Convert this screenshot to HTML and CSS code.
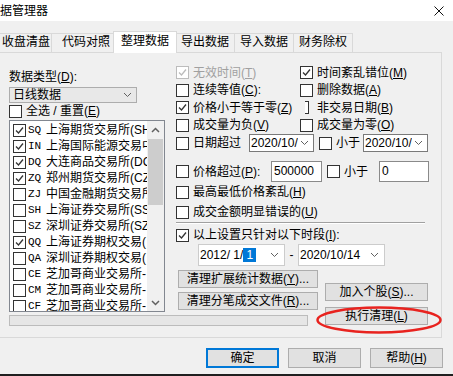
FILE: index.html
```html
<!DOCTYPE html>
<html lang="zh-CN">

<head>
    <meta charset="UTF-8">
    <meta name="viewport" content="width=device-width, initial-scale=1.0">
    <title>数据管理器</title>
    <link rel="stylesheet" href="styles.css">
</head>

<body>
    <div class="dialog">
        <div class="titlebar">
            <span class="title">据管理器</span>
            <span class="close"><svg viewBox="0 0 10 10"><path d="M0.5 0.5L9.5 9.5M9.5 0.5L0.5 9.5"/></svg></span>
        </div>

        <div class="tabs">
            <div class="tab">收盘清盘</div>
            <div class="tab">代码对照</div>
            <div class="tab active">整理数据</div>
            <div class="tab">导出数据</div>
            <div class="tab">导入数据</div>
            <div class="tab">财务除权</div>
        </div>

        <div class="panel">
            <!-- 左侧：数据类型 + 市场列表 -->
            <div class="types">
                <div class="label">数据类型(<u>D</u>):</div>
                <div class="combo">
                    <span class="value">日线数据</span>
                    <svg class="chev" viewBox="0 0 9 6"><path d="M1 1l3.5 3.5L8 1"/></svg>
                </div>
                <label class="check"><span class="box"></span><span>全选 / 重置(<u>E</u>)</span></label>
                <div class="listbox">
                    <div class="items">
                        <div class="item"><span class="box"><svg viewBox="0 0 11 11"><path d="M2 5.5l2.5 2.5L9 2.5"/></svg></span><span class="code">SQ</span>上海期货交易所(SHFE)</div>
                        <div class="item"><span class="box"><svg viewBox="0 0 11 11"><path d="M2 5.5l2.5 2.5L9 2.5"/></svg></span><span class="code">IN</span>上海国际能源交易中心</div>
                        <div class="item"><span class="box"><svg viewBox="0 0 11 11"><path d="M2 5.5l2.5 2.5L9 2.5"/></svg></span><span class="code">DQ</span>大连商品交易所(DCE)</div>
                        <div class="item"><span class="box"><svg viewBox="0 0 11 11"><path d="M2 5.5l2.5 2.5L9 2.5"/></svg></span><span class="code">ZQ</span>郑州期货交易所(CZCE)</div>
                        <div class="item"><span class="box"></span><span class="code">ZJ</span>中国金融期货交易所</div>
                        <div class="item"><span class="box"></span><span class="code">SH</span>上海证券交易所(SSE)</div>
                        <div class="item"><span class="box"></span><span class="code">SZ</span>深圳证券交易所(SZSE)</div>
                        <div class="item"><span class="box"><svg viewBox="0 0 11 11"><path d="M2 5.5l2.5 2.5L9 2.5"/></svg></span><span class="code">QQ</span>上海证券期权交易(</div>
                        <div class="item"><span class="box"></span><span class="code">QA</span>深圳证券期权交易(</div>
                        <div class="item"><span class="box"></span><span class="code">CE</span>芝加哥商业交易所-</div>
                        <div class="item"><span class="box"></span><span class="code">CM</span>芝加哥商业交易所-</div>
                        <div class="item"><span class="box"></span><span class="code">CF</span>芝加哥商业交易所-</div>
                    </div>
                    <div class="scrollbar">
                        <div class="arrow"><svg viewBox="0 0 9 6"><path d="M1 5l3.5-3.5L8 5"/></svg></div>
                        <div class="track"><div class="thumb"></div></div>
                        <div class="arrow"><svg viewBox="0 0 9 6"><path d="M1 1l3.5 3.5L8 1"/></svg></div>
                    </div>
                </div>
            </div>

            <!-- 右侧：整理选项 -->
            <div class="settings">
                <div class="opts">
                    <label class="check off"><span class="box"><svg viewBox="0 0 11 11"><path d="M2 5.5l2.5 2.5L9 2.5"/></svg></span><span>无效时间(<u>T</u>)</span></label>
                    <label class="check"><span class="box"><svg viewBox="0 0 11 11"><path d="M2 5.5l2.5 2.5L9 2.5"/></svg></span><span>时间紊乱错位(<u>M</u>)</span></label>
                    <label class="check"><span class="box"></span><span>连续等值(<u>C</u>):</span></label>
                    <label class="check"><span class="box"></span><span>删除数据(<u>A</u>)</span></label>
                    <label class="check"><span class="box"><svg viewBox="0 0 11 11"><path d="M2 5.5l2.5 2.5L9 2.5"/></svg></span><span>价格小于等于零(<u>Z</u>)</span></label>
                    <label class="check"><span class="box cut"></span><span>非交易日期(<u>B</u>)</span></label>
                    <label class="check"><span class="box"></span><span>成交量为负(<u>V</u>)</span></label>
                    <label class="check"><span class="box"></span><span>成交量为零(<u>O</u>)</span></label>
                </div>

                <div class="row date-row">
                    <label class="check"><span class="box"></span><span>日期超过</span></label>
                    <div class="combo date">
                        <span class="value">2020/10/14</span>
                        <svg class="chev" viewBox="0 0 9 6"><path d="M1 1l3.5 3.5L8 1"/></svg>
                    </div>
                    <label class="check"><span class="box"></span><span>小于</span></label>
                    <div class="combo date">
                        <span class="value">2020/10/14</span>
                        <svg class="chev" viewBox="0 0 9 6"><path d="M1 1l3.5 3.5L8 1"/></svg>
                    </div>
                </div>

                <div class="row price-row">
                    <label class="check"><span class="box"></span><span>价格超过(<u>P</u>):</span></label>
                    <div class="edit">500000</div>
                    <label class="check"><span class="box"></span><span>小于</span></label>
                    <div class="edit">0</div>
                </div>

                <label class="check line"><span class="box"></span><span>最高最低价格紊乱(<u>H</u>)</span></label>
                <label class="check line"><span class="box"></span><span>成交金额明显错误的(<u>U</u>)</span></label>
                <div class="sep"></div>
                <label class="check period-check"><span class="box"><svg viewBox="0 0 11 11"><path d="M2 5.5l2.5 2.5L9 2.5"/></svg></span><span>以上设置只针对以下时段(<u>I</u>):</span></label>

                <div class="period">
                    <div class="picker">
                        <span class="value">2012/ 1/<span class="sel">1</span></span>
                        <svg class="chev" viewBox="0 0 9 6"><path d="M1 1l3.5 3.5L8 1"/></svg>
                    </div>
                    <span class="dash">-</span>
                    <div class="picker">
                        <span class="value">2020/10/14</span>
                        <svg class="chev" viewBox="0 0 9 6"><path d="M1 1l3.5 3.5L8 1"/></svg>
                    </div>
                </div>
            </div>

            <div class="cleanups">
                <button class="btn">清理扩展统计数据(<u>Y</u>)...</button>
                <button class="btn">清理分笔成交文件(<u>R</u>)...</button>
            </div>

            <div class="actions">
                <button class="btn">加入个股(<u>S</u>)...</button>
                <button class="btn">执行清理(<u>L</u>)</button>
            </div>

            <div class="progress"></div>
        </div>

        <div class="footer">
            <button class="btn default">确定</button>
            <button class="btn">取消</button>
            <button class="btn">帮助(<u>H</u>)</button>
        </div>

        <!-- 红圈标注 -->
        <svg class="mark" viewBox="0 0 130 32"><ellipse cx="64" cy="16" rx="61.5" ry="12.5"/></svg>
    </div>
</body>

</html>
```
FILE: styles.css
```css
* {
    margin: 0;
    padding: 0;
    box-sizing: border-box;
}

body {
    font: 12px/14px "Liberation Sans", "Noto Sans CJK SC", sans-serif;
    color: #000;
    background-color: #f0f0f0;
}

u {
    text-decoration: underline;
}

.dialog {
    position: relative;
    width: 453px;
    height: 376px;
    overflow: hidden;
    background-color: #f0f0f0;
    border-bottom: 2px solid #1f1f1f;
}

/* 标题栏 */
.titlebar {
    display: flex;
    justify-content: space-between;
    align-items: center;
    height: 21px;
    padding-right: 9px;
    background-color: #fff;
}

.close svg {
    display: block;
    width: 10px;
    height: 10px;
    stroke: #111;
    stroke-width: 1;
}

/* 选项卡 */
.tabs {
    display: flex;
    align-items: flex-end;
    height: 21px;
    margin: 10px 0 0 -9px;
}

.tab {
    height: 19px;
    padding: 0 5px;
    border: 1px solid #d9d9d9;
    border-left: 0;
    border-bottom: 0;
    line-height: 17px;
    white-space: nowrap;
    background-color: #f0f0f0;
}

.tab:first-child {
    padding: 0 1px 0 10px;
    border-left: 1px solid #d9d9d9;
}

.tab:nth-child(2) {
    padding: 0 3px 0 10px;
}

.tab.active {
    position: relative;
    z-index: 2;
    height: 22px;
    margin: 0 -1px -1px -1px;
    padding: 0 7px;
    border-left: 1px solid #d9d9d9;
    line-height: 19px;
    background-color: #fff;
}

/* 面板 */
.panel {
    position: relative;
    display: grid;
    grid-template-columns: 167px 149px 1fr;
    grid-template-rows: 206px 44px 16px;
    width: 443px;
    margin-left: -1px;
    padding: 11px 0 7px 9px;
    border: 1px solid #d9d9d9;
}

.types {
    grid-column: 1;
    grid-row: 1 / 3;
    width: 156px;
    margin-top: 6px;
}

.label {
    height: 14px;
}

.combo {
    display: flex;
    align-items: center;
    width: 128px;
    height: 16px;
    margin-top: 3px;
    padding-left: 3px;
    border: 1px solid #adadad;
    background-color: #e8e8e8;
    overflow: hidden;
}

.combo .value,
.picker .value {
    flex: 1;
    overflow: hidden;
    white-space: nowrap;
}

.chev {
    flex: none;
    width: 9px;
    height: 6px;
    margin: 0 4px 0 2px;
    fill: none;
    stroke: #606060;
    stroke-width: 1;
}

.check {
    display: flex;
    align-items: center;
    white-space: nowrap;
}

.check .box {
    margin-right: 4px;
}

.types > .check {
    height: 14px;
    margin-top: 1px;
}

.box {
    flex: none;
    width: 13px;
    height: 13px;
    border: 1px solid #333;
    background-color: #fff;
}

.box svg {
    display: block;
    width: 11px;
    height: 11px;
    fill: none;
    stroke: #333;
    stroke-width: 1.3;
}

.check.off {
    color: #a0a0a0;
}

.check.off .box {
    border-color: #bcbcbc;
}

.check.off .box svg {
    stroke: #bcbcbc;
}

.check .box.cut {
    width: 4px;
    margin: 0 8px 0 5px;
    border-left: 0;
}

/* 市场列表 */
.listbox {
    display: flex;
    height: 192px;
    margin-top: 2px;
    border: 1px solid #828790;
    background-color: #fff;
}

.items {
    flex: 1;
    overflow: hidden;
    padding: 1px 0 0 3px;
}

.item {
    display: flex;
    align-items: center;
    height: 16px;
    white-space: nowrap;
}

.item .box {
    margin-right: 2px;
}

.code {
    flex: none;
    width: 18px;
    font-family: "Liberation Mono", monospace;
    font-size: 11px;
}

.scrollbar {
    display: flex;
    flex-direction: column;
    width: 17px;
    background-color: #f0f0f0;
}

.arrow {
    display: flex;
    align-items: center;
    justify-content: center;
    height: 17px;
}

.arrow svg {
    width: 9px;
    height: 6px;
    fill: none;
    stroke: #606060;
    stroke-width: 1.5;
}

.track {
    flex: 1;
    padding-top: 1px;
}

.thumb {
    height: 66px;
    margin: 0 1px;
    background-color: #cdcdcd;
}

/* 右侧选项 */
.settings {
    grid-column: 2 / 4;
    grid-row: 1;
    display: flex;
    flex-direction: column;
}

.opts {
    display: grid;
    grid-template-columns: 124px 1fr;
    grid-auto-rows: 17.5px;
}

.row {
    display: grid;
    align-items: center;
}

.date-row {
    grid-template-columns: 73px 65px 49px 65px;
    height: 18px;
}

.price-row {
    grid-template-columns: 95px 51px 57px 50px;
    height: 21px;
    margin-top: 9px;
}

.row > .check:nth-child(3) {
    padding-left: 5px;
}

.combo.date {
    width: 65px;
    height: 18px;
    margin: 0;
    padding-left: 1px;
    border-color: #7a7a7a;
    background-color: #fff;
}

.edit {
    height: 21px;
    padding-left: 2px;
    border: 1px solid #8a8a8a;
    line-height: 19px;
    background-color: #fff;
}

.check.line {
    height: 20px;
}

.sep {
    height: 2px;
    margin-right: 16px;
    border-top: 1px solid #a0a0a0;
    border-bottom: 1px solid #fff;
}

.period-check {
    height: 18px;
    margin-top: 2px;
}

.period {
    display: flex;
    align-items: center;
    height: 22px;
    margin-left: 22px;
}

.picker {
    display: flex;
    align-items: center;
    width: 87px;
    height: 22px;
    padding-left: 1px;
    border: 1px solid #ccc;
    background-color: #fff;
}

.picker .chev {
    margin-right: 5px;
}

.sel {
    display: inline-block;
    padding: 0 3px;
    color: #fff;
    background-color: #0078d7;
}

.dash {
    width: 13px;
    text-align: center;
}

/* 按钮 */
.btn {
    height: 18px;
    padding: 0;
    border: 1px solid #adadad;
    font: inherit;
    line-height: 16px;
    text-align: center;
    white-space: nowrap;
    color: #000;
    background-color: #e1e1e1;
}

.cleanups {
    grid-column: 2;
    grid-row: 2;
    display: flex;
    flex-direction: column;
    gap: 4px;
    width: 140px;
    margin-left: 2px;
}

.actions {
    grid-column: 3;
    grid-row: 2 / 4;
    display: flex;
    flex-direction: column;
    gap: 6px;
    width: 103px;
    margin-top: 13px;
}

.progress {
    grid-column: 1 / 3;
    grid-row: 3;
    width: 299px;
    height: 11px;
    margin-top: 1px;
    border: 1px solid #bcbcbc;
    background-color: #e6e6e6;
}

.footer {
    display: flex;
    justify-content: flex-end;
    gap: 9px;
    margin-top: 10px;
    padding-right: 10px;
}

.footer .btn {
    width: 73px;
    height: 20px;
    line-height: 18px;
}

.footer .btn.default {
    border-color: #0078d7;
    box-shadow: inset 0 0 0 1px #0078d7;
}

/* 标注 */
.mark {
    position: absolute;
    left: 315px;
    top: 304px;
    width: 130px;
    height: 32px;
    fill: none;
    stroke: #e8231f;
    stroke-width: 2.5;
}
```
